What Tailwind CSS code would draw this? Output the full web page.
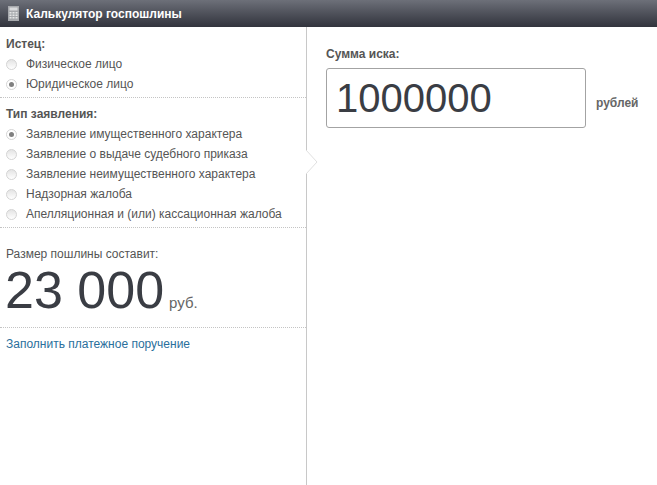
<!DOCTYPE html>
<html>
<head>
<meta charset="utf-8">
<script src="https://cdn.jsdelivr.net/npm/@tailwindcss/browser@4"></script>
</head>
<body class="bg-white font-['Liberation_Sans',Arial,sans-serif] text-[12px] text-[#555]">
<div class="h-[485px] w-[657px] overflow-hidden flex flex-col">
  <header class="h-[27px] shrink-0 flex items-center pl-[8px] gap-[6px] bg-gradient-to-b from-[#6d7079] to-[#32343d]">
    <svg width="12" height="15" viewBox="0 0 12 15"><rect x="0" y="0" width="11" height="15" fill="#a6a8ac"/><rect x="1.5" y="1.5" width="8" height="3" fill="#d9dadc"/><g fill="#e4e5e6"><rect x="1.5" y="6" width="2" height="1.5"/><rect x="4.5" y="6" width="2" height="1.5"/><rect x="7.5" y="6" width="2" height="1.5"/><rect x="1.5" y="8.5" width="2" height="1.5"/><rect x="4.5" y="8.5" width="2" height="1.5"/><rect x="7.5" y="8.5" width="2" height="1.5"/><rect x="1.5" y="11" width="2" height="1.5"/><rect x="4.5" y="11" width="2" height="1.5"/><rect x="7.5" y="11" width="2" height="1.5"/></g></svg>
    <h1 class="text-[12px] font-bold text-white">Калькулятор госпошлины</h1>
  </header>
  <div class="flex flex-1 min-h-0">
    <aside class="relative w-[307px] shrink-0 border-r border-[#c8c8c8]">
      <section class="h-[71px] border-b border-dotted border-[#c4c4c4] pl-[6px] pt-[10px]">
        <h2 class="font-bold leading-[14px] text-[#555]">Истец:</h2>
        <ul class="mt-[3px]">
          <li class="flex h-[20px] items-center"><span class="size-[11px] rounded-full border border-[#d4d4d4] bg-gradient-to-b from-[#e4e4e4] to-white mr-[9px]"></span>Физическое лицо</li>
          <li class="flex h-[20px] items-center"><span class="size-[11px] rounded-full border border-[#d4d4d4] bg-white mr-[9px] flex items-center justify-center"><span class="size-[5px] rounded-full bg-[#808080]"></span></span>Юридическое лицо</li>
        </ul>
      </section>
      <section class="h-[130px] border-b border-dotted border-[#c4c4c4] pl-[6px] pt-[9px]">
        <h2 class="font-bold leading-[14px] text-[#555]">Тип заявления:</h2>
        <ul class="mt-[3px]">
          <li class="flex h-[20px] items-center"><span class="size-[11px] rounded-full border border-[#d4d4d4] bg-white mr-[9px] flex items-center justify-center"><span class="size-[5px] rounded-full bg-[#808080]"></span></span>Заявление имущественного характера</li>
          <li class="flex h-[20px] items-center"><span class="size-[11px] rounded-full border border-[#d4d4d4] bg-gradient-to-b from-[#e4e4e4] to-white mr-[9px]"></span>Заявление о выдаче судебного приказа</li>
          <li class="flex h-[20px] items-center"><span class="size-[11px] rounded-full border border-[#d4d4d4] bg-gradient-to-b from-[#e4e4e4] to-white mr-[9px]"></span>Заявление неимущественного характера</li>
          <li class="flex h-[20px] items-center"><span class="size-[11px] rounded-full border border-[#d4d4d4] bg-gradient-to-b from-[#e4e4e4] to-white mr-[9px]"></span>Надзорная жалоба</li>
          <li class="flex h-[20px] items-center"><span class="size-[11px] rounded-full border border-[#d4d4d4] bg-gradient-to-b from-[#e4e4e4] to-white mr-[9px]"></span>Апелляционная и (или) кассационная жалоба</li>
        </ul>
      </section>
      <section class="h-[100px] border-b border-dotted border-[#c4c4c4] pl-[6px] pt-[19px]">
        <p class="leading-[14px]">Размер пошлины составит:</p>
        <p class="-mt-[1px] -ml-[1px] flex items-baseline text-[#3a3d44]"><span class="text-[52px] leading-[60px]">23 000</span><span class="ml-[5px] text-[15px] text-[#666]">руб.</span></p>
      </section>
      <a href="#" class="block pl-[6px] pt-[9px] leading-[14px] text-[#2a6f9c]">Заполнить платежное поручение</a>
      <svg class="absolute left-[305px] top-[123px]" width="13" height="24" viewBox="0 0 13 24"><path d="M1 0 L12 12 L1 24" fill="#fff" stroke="#e0e0e0"/></svg>
    </aside>
    <main class="pl-[19px] pt-[20px]">
      <label class="block font-bold leading-[14px] text-[#555]">Сумма иска:</label>
      <div class="mt-[7px] flex items-end">
        <div class="flex h-[60px] w-[260px] items-center rounded-[3px] border border-[#a3a3a3] pl-[9px] text-[40px] text-[#3a3d44]">1000000</div>
        <span class="ml-[10px] pb-[16px] font-bold text-[#666]">рублей</span>
      </div>
    </main>
  </div>
</div>
</body>
</html>
